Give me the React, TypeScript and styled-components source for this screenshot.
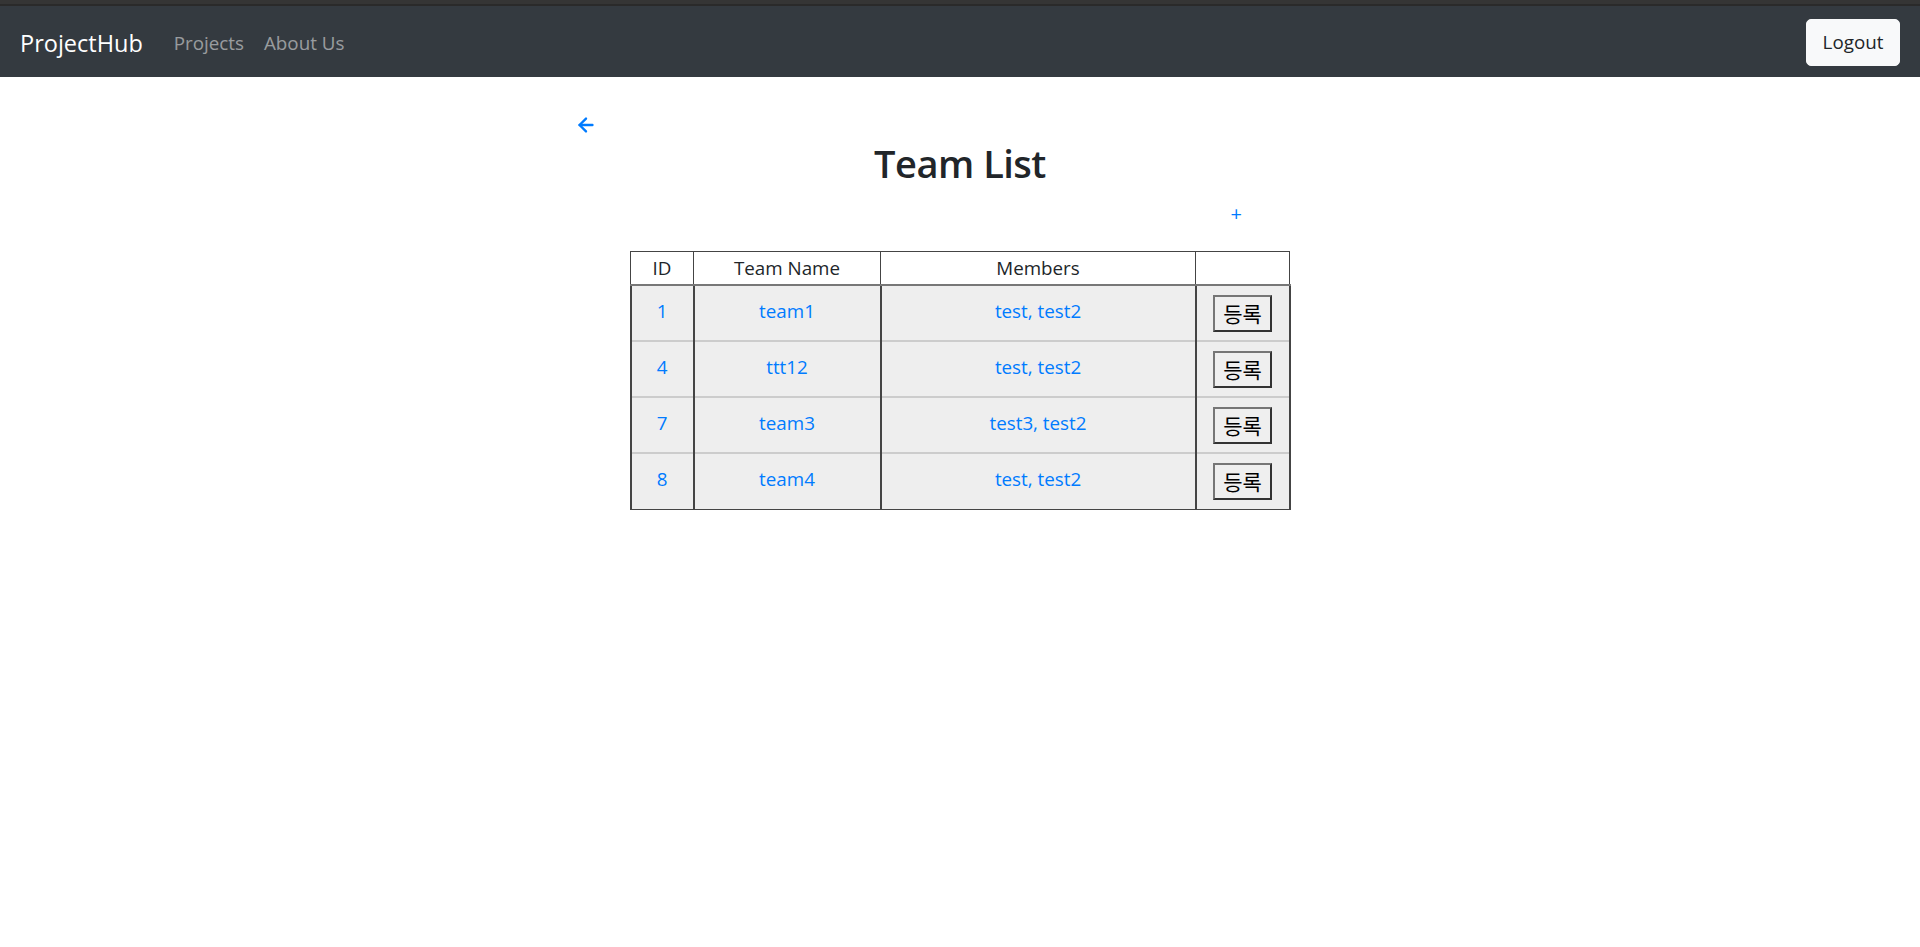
import React from "react";
import styled, { createGlobalStyle } from "styled-components";
import { ArrowLeft } from "lucide-react";

const TEAMS = [
    { id: 1, name: "team1", members: ["test", "test2"] },
    { id: 4, name: "ttt12", members: ["test", "test2"] },
    { id: 7, name: "team3", members: ["test3", "test2"] },
    { id: 8, name: "team4", members: ["test", "test2"] },
];

const GlobalStyle = createGlobalStyle`
    body {
        margin: 0;
        background: #fff;
        color: #212529;
        font-family: "Open Sans", "Noto Sans", "Noto Sans CJK KR", sans-serif;
        font-size: 18.8px;
        line-height: 1.5;
    }
    * {
        box-sizing: border-box;
    }
`;

const App: React.FC = () => {
    return (
        <>
            <GlobalStyle />
            <TopStrip />
            <Navbar>
                <NavLeft>
                    <Brand href="#">ProjectHub</Brand>
                    <NavLinks>
                        <NavLink href="#">Projects</NavLink>
                        <NavLink href="#">About Us</NavLink>
                    </NavLinks>
                </NavLeft>
                <LogoutButton>Logout</LogoutButton>
            </Navbar>
            <Main>
                <BackLink href="#">
                    <ArrowLeft size={22} strokeWidth={2.6} />
                </BackLink>
                <Title>Team List</Title>
                <AddRow>
                    <AddLink href="#">+</AddLink>
                </AddRow>
                <Table>
                    <colgroup>
                        <col style={{ width: 63 }} />
                        <col style={{ width: 187 }} />
                        <col style={{ width: 315 }} />
                        <col style={{ width: 94 }} />
                    </colgroup>
                    <thead>
                        <tr>
                            <Th>ID</Th>
                            <Th>Team Name</Th>
                            <Th>Members</Th>
                            <Th />
                        </tr>
                    </thead>
                    <tbody>
                        {TEAMS.map((team) => (
                            <Row key={team.id}>
                                <Td>
                                    <CellLink href="#">{team.id}</CellLink>
                                </Td>
                                <Td>
                                    <CellLink href="#">{team.name}</CellLink>
                                </Td>
                                <Td>
                                    <CellLink href="#">
                                        {team.members.join(", ")}
                                    </CellLink>
                                </Td>
                                <Td>
                                    <RegisterButton>등록</RegisterButton>
                                </Td>
                            </Row>
                        ))}
                    </tbody>
                </Table>
            </Main>
        </>
    );
};

const TopStrip = styled.div`
    height: 6px;
    background: #353535;
    border-bottom: 2px solid #2a2a2a;
`;

const Navbar = styled.nav`
    height: 71px;
    background-color: #343a40;
    display: flex;
    align-items: center;
    justify-content: space-between;
    padding: 0 20px;
`;

const NavLeft = styled.div`
    display: flex;
    align-items: center;
    padding-top: 4px;
`;

const Brand = styled.a`
    color: #fff;
    font-size: 23.5px;
    text-decoration: none;
    margin-right: 21px;
    white-space: nowrap;
`;

const NavLinks = styled.div`
    display: flex;
    align-items: center;
`;

const NavLink = styled.a`
    color: rgba(255, 255, 255, 0.5);
    font-size: 18.8px;
    text-decoration: none;
    padding: 8px 10px;
`;

const LogoutButton = styled.button`
    font-family: inherit;
    font-size: 18.8px;
    line-height: 1.5;
    color: #212529;
    background-color: #f8f9fa;
    border: 1px solid #f8f9fa;
    border-radius: 5px;
    padding: 7px 15px;
    width: 94px;
    height: 47px;
    margin-top: 2px;
    cursor: pointer;
`;

const Main = styled.main`
    width: 764px;
    margin: 0 auto;
    padding-top: 37px;
    display: flex;
    flex-direction: column;
`;

const BackLink = styled.a`
    color: #007bff;
    display: flex;
    width: 22px;
    height: 22px;
    margin-left: -3px;
`;

const Title = styled.h1`
    margin: 0;
    margin-top: 5px;
    text-align: center;
    font-size: 38px;
    font-weight: 600;
    letter-spacing: -0.5px;
    line-height: 1.2;
    color: #212529;
`;

const AddRow = styled.div`
    display: flex;
    justify-content: flex-end;
    padding-right: 100px;
    margin-top: 15px;
    height: 49px;
`;

const AddLink = styled.a`
    color: #007bff;
    text-decoration: none;
    font-size: 20px;
    line-height: 24px;
`;

const Table = styled.table`
    width: 659px;
    margin: 0 auto;
    border-collapse: collapse;
    table-layout: fixed;
    border: 1px solid #444;
    text-align: center;
`;

const Th = styled.th`
    font-weight: 400;
    padding: 0;
    height: 34px;
    line-height: 24px;
    border-left: 1px solid #444;
    border-right: 1px solid #444;
    border-bottom: 2px solid #777;
    background: #fff;
    color: #212529;
`;

const Row = styled.tr`
    background: #eeeeee;
    & + & td {
        border-top: 2px solid #ccc;
    }
`;

const Td = styled.td`
    height: 56px;
    padding: 0;
    vertical-align: middle;
    border-left: 2px solid #444;
    border-right: 2px solid #444;
`;

const CellLink = styled.a`
    color: #007bff;
    text-decoration: none;
    position: relative;
    top: -2px;
`;

const RegisterButton = styled.button`
    width: 59px;
    height: 37px;
    background: #efefef;
    border: 2px solid;
    border-color: #767676 #333 #333 #767676;
    font-family: "Noto Sans CJK KR", sans-serif;
    font-size: 21px;
    line-height: 1;
    color: #000;
    padding: 0;
    cursor: pointer;
    vertical-align: middle;
`;

export default App;
